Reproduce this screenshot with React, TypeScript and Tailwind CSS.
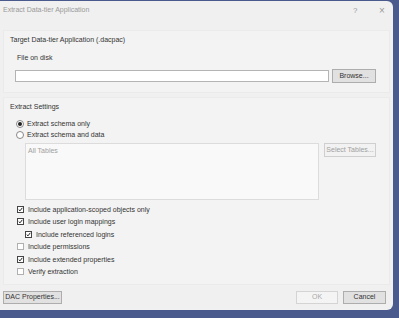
import React from "react";

const font = { fontFamily: '"Liberation Sans", Arial, sans-serif' };

function CheckRow({
  label,
  checked,
  indent,
}: {
  label: string;
  checked?: boolean;
  indent?: boolean;
}) {
  return (
    <div
      className={`flex h-[12.5px] items-center gap-[4px] ${
        indent ? "pl-[21px]" : "pl-[13px]"
      }`}
    >
      <div
        className={`flex h-[7px] w-[7px] items-center justify-center border bg-white ${
          checked ? "border-[#444]" : "border-[#b0b0b0]"
        }`}
      >
        {checked && (
          <svg width="7" height="7" viewBox="0 0 7 7">
            <path d="M1 3.6 L2.8 5.4 L6 1.2" fill="none" stroke="#111" strokeWidth="1.3" />
          </svg>
        )}
      </div>
      <span className="text-[7px] leading-none text-[#333]">{label}</span>
    </div>
  );
}

function RadioRow({ label, checked }: { label: string; checked?: boolean }) {
  return (
    <div className="flex h-[11px] items-center gap-[3px] pl-[12px]">
      <div className="flex h-[8px] w-[8px] items-center justify-center rounded-full border border-[#888] bg-white">
        {checked && <div className="h-[4px] w-[4px] rounded-full bg-[#222]" />}
      </div>
      <span className="text-[7px] leading-none text-[#333]">{label}</span>
    </div>
  );
}

export default function App() {
  return (
    <div className="h-[318px] w-[399px] bg-[#4a5a8c] pt-[1px]" style={font}>
      <div className="flex h-[309px] w-[393px] flex-col rounded-r-[6px] bg-[#f0f0f0]">
        {/* title bar */}
        <div className="flex h-[19px] items-center pl-[3px] text-[7px] text-[#9a9a9a]">
          <span className="flex-1">Extract Data-tier Application</span>
          <span className="w-[26px] text-[8px]">?</span>
          <span className="w-[14px] text-[10px] leading-none">×</span>
        </div>

        {/* target panel */}
        <div className="mx-[3px] mt-[10px] h-[63px] border border-[#ebebeb] bg-[#f3f3f3] pl-[6px] pt-[4px]">
          <div className="text-[7px] leading-[10px] text-[#333]">
            Target Data-tier Application (.dacpac)
          </div>
          <div className="mt-[8px] pl-[7px] text-[7px] leading-[10px] text-[#333]">
            File on disk
          </div>
          <div className="mt-[6px] flex items-center gap-[3px] pl-[5px]">
            <div className="h-[12px] w-[314px] border border-[#b4b4b4] bg-white" />
            <div className="flex h-[14px] w-[44px] items-center justify-center border border-[#adadad] bg-[#e1e1e1] text-[7px] text-[#333]">
              Browse...
            </div>
          </div>
        </div>

        {/* extract settings panel */}
        <div className="mx-[3px] mt-[4px] h-[188px] border border-[#ebebeb] bg-[#f3f3f3] pt-[4px]">
          <div className="pl-[6px] text-[7px] leading-[10px] text-[#333]">Extract Settings</div>
          <div className="mt-[6px]">
            <RadioRow label="Extract schema only" checked />
            <RadioRow label="Extract schema and data" />
          </div>
          <div className="mt-[3px] flex items-start gap-[5px] pl-[21px]">
            <div className="h-[57px] w-[294px] border border-[#dcdcdc] bg-[#f9f9f9] pl-[2px] pt-[2px] text-[7px] leading-[10px] text-[#a0a0a0]">
              All Tables
            </div>
            <div className="flex h-[14px] w-[52px] items-center justify-center border border-[#cfcfcf] bg-[#f2f2f2] text-[7px] text-[#a0a0a0]">
              Select Tables...
            </div>
          </div>
          <div className="mt-[3px]">
            <CheckRow label="Include application-scoped objects only" checked />
            <CheckRow label="Include user login mappings" checked />
            <CheckRow label="Include referenced logins" checked indent />
            <CheckRow label="Include permissions" />
            <CheckRow label="Include extended properties" checked />
            <CheckRow label="Verify extraction" />
          </div>
        </div>

        {/* footer */}
        <div className="mt-[6px] flex items-center px-[3px]">
          <div className="flex h-[13px] w-[59px] items-center justify-center border border-[#adadad] bg-[#e1e1e1] text-[7px] text-[#333]">
            DAC Properties...
          </div>
          <div className="flex-1" />
          <div className="flex h-[13px] w-[42px] items-center justify-center border border-[#d4d4d4] bg-[#f4f4f4] text-[7px] text-[#a8a8a8]">
            OK
          </div>
          <div className="ml-[5px] mr-[4px] flex h-[13px] w-[43px] items-center justify-center border border-[#adadad] bg-[#e1e1e1] text-[7px] text-[#333]">
            Cancel
          </div>
        </div>
      </div>
    </div>
  );
}
